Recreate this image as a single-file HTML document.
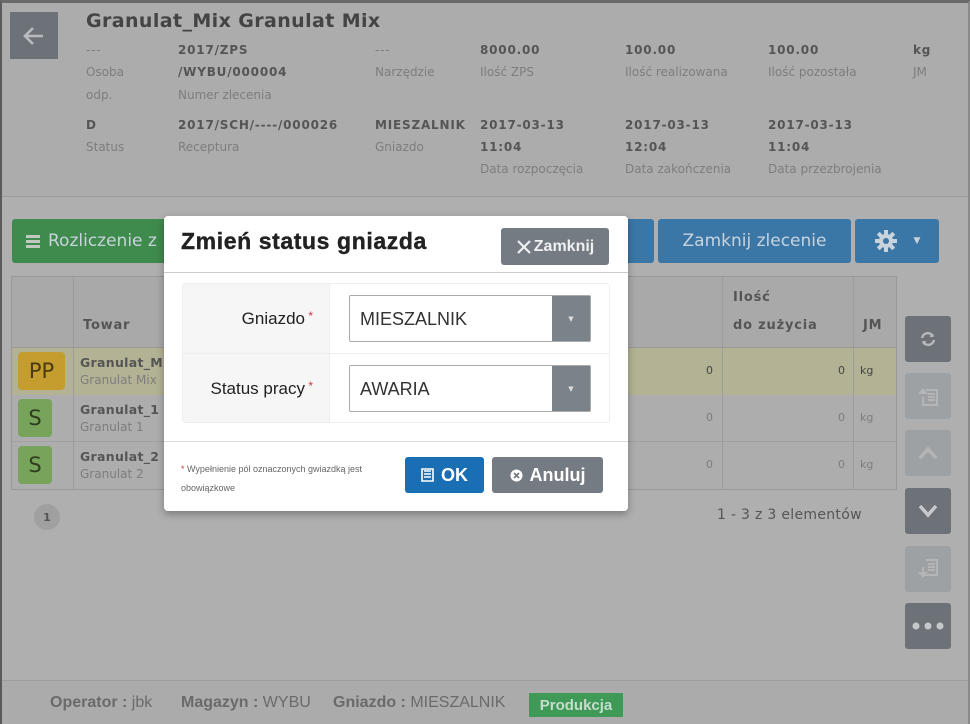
<!DOCTYPE html>
<html><head><meta charset="utf-8"><style>
*{box-sizing:border-box;margin:0;padding:0}
body{width:970px;height:724px;overflow:hidden;background:#afafaf;font-family:"DejaVu Sans","Liberation Sans",sans-serif;position:relative}
.abs{position:absolute}
.frame{position:absolute;left:0;top:0;width:970px;height:724px;border-left:2px solid #5a5a5a;border-top:3px solid #6a6a6a;border-right:2px solid #8a8a8a;pointer-events:none}
.hdr{left:0;top:0;width:970px;height:197px;background:#acacac;border-bottom:1px solid #9c9c9c}
.v{font-size:12px;font-weight:bold;color:#555;white-space:nowrap;letter-spacing:0.8px}
.l{font-size:12px;color:#7d7d7d;white-space:nowrap}
.btn{position:absolute;border-radius:3px;color:#c9d3dc;font-size:17px;display:flex;align-items:center;justify-content:center}
.sb{position:absolute;left:905px;width:46px;height:46px;border-radius:3px;display:flex;align-items:center;justify-content:center}
.foot{left:0;top:680px;width:970px;height:44px;background:#ababab;border-top:1px solid #9d9d9d}
.ft{position:absolute;top:694px;font-size:16px;color:#6a6a6a;white-space:nowrap;font-family:'Liberation Sans Narrow','Liberation Sans',sans-serif}
</style></head><body>
<div class="abs hdr"></div>
<div class="abs" style="left:10px;top:12px;width:48px;height:47px;background:#6c7278;display:flex;align-items:center;justify-content:center">
<svg width="22" height="20" viewBox="0 0 22 20"><path d="M10 2 L2 10 L10 18 M2 10 H20" stroke="#b8bcc0" stroke-width="2.6" fill="none"/></svg></div>
<div class="abs" style="left:86px;top:10px;font-size:19px;font-weight:bold;color:#444;letter-spacing:0.4px">Granulat_Mix Granulat Mix</div>

<div class="abs v" style="left:86px;top:43px;color:#7d7d7d;font-weight:normal">---</div>
<div class="abs l" style="left:86px;top:65px">Osoba</div>
<div class="abs l" style="left:86px;top:88px">odp.</div>
<div class="abs v" style="left:178px;top:43px">2017/ZPS</div>
<div class="abs v" style="left:178px;top:65px">/WYBU/000004</div>
<div class="abs l" style="left:178px;top:88px">Numer zlecenia</div>
<div class="abs v" style="left:375px;top:43px;color:#7d7d7d;font-weight:normal">---</div>
<div class="abs l" style="left:375px;top:65px">Narzędzie</div>
<div class="abs v" style="left:480px;top:43px">8000.00</div>
<div class="abs l" style="left:480px;top:65px">Ilość ZPS</div>
<div class="abs v" style="left:625px;top:43px">100.00</div>
<div class="abs l" style="left:625px;top:65px">Ilość realizowana</div>
<div class="abs v" style="left:768px;top:43px">100.00</div>
<div class="abs l" style="left:768px;top:65px">Ilość pozostała</div>
<div class="abs v" style="left:913px;top:43px">kg</div>
<div class="abs l" style="left:913px;top:65px">JM</div>

<div class="abs v" style="left:86px;top:118px">D</div>
<div class="abs l" style="left:86px;top:140px">Status</div>
<div class="abs v" style="left:178px;top:118px">2017/SCH/----/000026</div>
<div class="abs l" style="left:178px;top:140px">Receptura</div>
<div class="abs v" style="left:375px;top:118px">MIESZALNIK</div>
<div class="abs l" style="left:375px;top:140px">Gniazdo</div>
<div class="abs v" style="left:480px;top:118px">2017-03-13</div>
<div class="abs v" style="left:480px;top:140px">11:04</div>
<div class="abs l" style="left:480px;top:162px">Data rozpoczęcia</div>
<div class="abs v" style="left:625px;top:118px">2017-03-13</div>
<div class="abs v" style="left:625px;top:140px">12:04</div>
<div class="abs l" style="left:625px;top:162px">Data zakończenia</div>
<div class="abs v" style="left:768px;top:118px">2017-03-13</div>
<div class="abs v" style="left:768px;top:140px">11:04</div>
<div class="abs l" style="left:768px;top:162px">Data przezbrojenia</div>

<div class="btn" style="left:12px;top:219px;width:160px;height:44px;background:#3f8a4d;justify-content:flex-start;padding-left:14px">
<span style="display:inline-block;width:14px;margin-right:8px"><span style="display:block;height:3px;background:#c0c8c0;margin:2px 0"></span><span style="display:block;height:3px;background:#c0c8c0;margin:2px 0"></span><span style="display:block;height:3px;background:#c0c8c0;margin:2px 0"></span></span>Rozliczenie z</div>
<div class="btn" style="left:600px;top:219px;width:54px;height:44px;background:#3a76a6"></div>
<div class="btn" style="left:658px;top:219px;width:193px;height:44px;background:#3a76a6">Zamknij zlecenie</div>
<div class="btn" style="left:855px;top:219px;width:84px;height:44px;background:#3a76a6">
<svg width="24" height="24" viewBox="0 0 24 24" style="margin-right:16px"><g fill="#c9d3dc"><circle cx="12" cy="12" r="7"/><rect x="10" y="1" width="4" height="22"/><rect x="1" y="10" width="22" height="4"/><rect x="10" y="1" width="4" height="22" transform="rotate(45 12 12)"/><rect x="10" y="1" width="4" height="22" transform="rotate(-45 12 12)"/></g><circle cx="12" cy="12" r="3" fill="#3a76a6"/></svg><span style="font-size:9px">▼</span></div>

<div class="abs" style="left:11px;top:276px;width:886px;height:214px;border:1px solid #999;background:#a9a9a9"></div>
<div class="abs" style="left:12px;top:348px;width:884px;height:47px;background:#b3b294"></div>
<div class="abs" style="left:12px;top:395px;width:884px;height:94px;background:#adadad"></div>
<div class="abs" style="left:12px;top:347px;width:884px;height:1px;background:#999"></div>
<div class="abs" style="left:12px;top:441px;width:884px;height:1px;background:#a0a0a0"></div>
<div class="abs" style="left:73px;top:277px;width:1px;height:212px;background:#9c9c9c"></div>
<div class="abs" style="left:722px;top:277px;width:1px;height:212px;background:#9c9c9c"></div>
<div class="abs" style="left:853px;top:277px;width:1px;height:212px;background:#9c9c9c"></div>
<div class="abs v" style="left:83px;top:318px;font-size:13px">Towar</div>
<div class="abs v" style="left:733px;top:290px;font-size:13px">Ilość</div>
<div class="abs v" style="left:733px;top:318px;font-size:13px">do zużycia</div>
<div class="abs v" style="left:863px;top:318px;font-size:13px">JM</div>

<div class="abs" style="left:18px;top:352px;width:47px;height:38px;background:#c59d2e;border-radius:4px;font-size:21px;color:#4a3a10;display:flex;align-items:center;justify-content:center">PP</div>
<div class="abs" style="left:18px;top:399px;width:34px;height:38px;background:#78a35a;border-radius:4px;font-size:21px;color:#2e3e20;display:flex;align-items:center;justify-content:center">S</div>
<div class="abs" style="left:18px;top:446px;width:34px;height:38px;background:#78a35a;border-radius:4px;font-size:21px;color:#2e3e20;display:flex;align-items:center;justify-content:center">S</div>
<div class="abs v" style="left:80px;top:355px;font-size:12.5px;letter-spacing:0.3px">Granulat_Mix</div>
<div class="abs l" style="left:80px;top:373px">Granulat Mix</div>
<div class="abs v" style="left:80px;top:402px;font-size:12.5px;letter-spacing:0.3px">Granulat_1</div>
<div class="abs l" style="left:80px;top:420px">Granulat 1</div>
<div class="abs v" style="left:80px;top:449px;font-size:12.5px;letter-spacing:0.3px">Granulat_2</div>
<div class="abs l" style="left:80px;top:467px">Granulat 2</div>
<div class="abs" style="left:706px;top:364px;font-size:11px;color:#444">0</div>
<div class="abs" style="left:838px;top:364px;font-size:11px;color:#444">0</div>
<div class="abs" style="left:860px;top:364px;font-size:11px;color:#444">kg</div>
<div class="abs" style="left:706px;top:411px;font-size:11px;color:#7d7d7d">0</div>
<div class="abs" style="left:838px;top:411px;font-size:11px;color:#7d7d7d">0</div>
<div class="abs" style="left:860px;top:411px;font-size:11px;color:#7d7d7d">kg</div>
<div class="abs" style="left:706px;top:458px;font-size:11px;color:#7d7d7d">0</div>
<div class="abs" style="left:838px;top:458px;font-size:11px;color:#7d7d7d">0</div>
<div class="abs" style="left:860px;top:458px;font-size:11px;color:#7d7d7d">kg</div>

<div class="abs" style="left:34px;top:504px;width:26px;height:26px;border-radius:50%;background:#a0a0a0;font-size:11px;font-weight:bold;color:#555;display:flex;align-items:center;justify-content:center">1</div>
<div class="abs" style="left:717px;top:507px;font-size:14px;color:#555;letter-spacing:0.3px">1 - 3 z 3 elementów</div>

<div class="sb" style="top:316px;background:#6d7278"><svg width="18" height="18" viewBox="0 0 18 18"><path d="M3 8 A6 6 0 0 1 14 6 M15 10 A6 6 0 0 1 4 12" stroke="#b5b9bd" stroke-width="2.4" fill="none"/><path d="M12 3 L15 7 L11 7Z M6 15 L3 11 L7 11Z" fill="#b5b9bd"/></svg></div>
<div class="sb" style="top:373px;background:#9ea1a4"><svg width="22" height="22" viewBox="0 0 22 22"><path d="M9 5h11v15H6v-8M11 9h7M11 12h7M11 15h7" stroke="#b3b5b7" stroke-width="2" fill="none"/><path d="M1 9 L6 3 L11 9Z" fill="#b3b5b7"/></svg></div>
<div class="sb" style="top:430px;background:#9ea1a4"><svg width="20" height="14" viewBox="0 0 20 14"><path d="M2 12 L10 3 L18 12" stroke="#b3b5b7" stroke-width="3.5" fill="none"/></svg></div>
<div class="sb" style="top:488px;background:#6d7278"><svg width="20" height="14" viewBox="0 0 20 14"><path d="M2 2 L10 11 L18 2" stroke="#c6c9cc" stroke-width="3.5" fill="none"/></svg></div>
<div class="sb" style="top:546px;background:#9ea1a4"><svg width="22" height="22" viewBox="0 0 22 22"><path d="M9 2h11v15H6V9M11 6h7M11 9h7M11 12h7" stroke="#b3b5b7" stroke-width="2" fill="none"/><path d="M1 14 L6 20 L11 14Z" fill="#b3b5b7"/></svg></div>
<div class="sb" style="top:603px;background:#6d7278"><svg width="32" height="8" viewBox="0 0 32 8"><circle cx="4" cy="4" r="3.5" fill="#c6c9cc"/><circle cx="16" cy="4" r="3.5" fill="#c6c9cc"/><circle cx="28" cy="4" r="3.5" fill="#c6c9cc"/></svg></div>

<div class="abs foot"></div>
<div class="ft" style="left:50px"><b>Operator :</b> jbk</div>
<div class="ft" style="left:181px"><b>Magazyn :</b> WYBU</div>
<div class="ft" style="left:333px"><b>Gniazdo :</b> MIESZALNIK</div>
<div class="abs" style="left:529px;top:693px;width:94px;height:24px;background:#3f9a58;color:#c6dccc;font-weight:bold;font-size:15px;font-family:'Liberation Sans Narrow','Liberation Sans',sans-serif;display:flex;align-items:center;justify-content:center">Produkcja</div>

<div class="frame"></div>

<!-- modal -->
<div class="abs" style="left:164px;top:216px;width:464px;height:295px;background:#fff;border-radius:4px;box-shadow:0 3px 8px rgba(0,0,0,.3)">
 <div class="abs" style="left:17px;top:12px;font-size:23px;font-weight:bold;color:#222;font-family:'Liberation Sans',sans-serif;letter-spacing:0.6px;-webkit-text-stroke:0.4px #222">Zmień status gniazda</div>
 <div class="abs" style="left:337px;top:12px;width:108px;height:37px;background:#747b82;border-radius:3px;color:#eef0f2;font-weight:bold;font-size:16px;font-family:'Liberation Sans',sans-serif;display:flex;align-items:center;justify-content:center"><svg width="16" height="16" viewBox="0 0 16 16" style="margin-right:2px"><path d="M2 2L14 14M14 2L2 14" stroke="#eef0f2" stroke-width="2.2"/></svg>Zamknij</div>
 <div class="abs" style="left:0;top:56px;width:464px;height:1px;background:#ccc"></div>
 <div class="abs" style="left:18px;top:67px;width:428px;height:140px;border:1px solid #eee;border-radius:3px;overflow:hidden">
  <div class="abs" style="left:0;top:0;width:147px;height:140px;background:#f6f6f6;border-right:1px solid #eee"></div>
  <div class="abs" style="left:0;top:69px;width:428px;height:1px;background:#eee"></div>
  <div class="abs" style="left:0;top:25px;width:130px;text-align:right;font-size:17px;color:#222;font-family:'Liberation Sans',sans-serif">Gniazdo<span style="color:#d33;font-size:12px;vertical-align:top"> *</span></div>
  <div class="abs" style="left:0;top:95px;width:130px;text-align:right;font-size:17px;color:#222;font-family:'Liberation Sans',sans-serif">Status pracy<span style="color:#d33;font-size:12px;vertical-align:top"> *</span></div>
  <div class="abs" style="left:166px;top:11px;width:242px;height:47px;border:1px solid #aaa;border-radius:2px;background:#fff"><span class="abs" style="left:10px;top:13px;font-size:18px;color:#333;font-family:'Liberation Sans',sans-serif">MIESZALNIK</span><div class="abs" style="right:0;top:0;width:38px;height:45px;background:#7b838a;color:#ddd;font-size:7px;display:flex;align-items:center;justify-content:center">▼</div></div>
  <div class="abs" style="left:166px;top:81px;width:242px;height:47px;border:1px solid #aaa;border-radius:2px;background:#fff"><span class="abs" style="left:10px;top:13px;font-size:18px;color:#333;font-family:'Liberation Sans',sans-serif">AWARIA</span><div class="abs" style="right:0;top:0;width:38px;height:45px;background:#7b838a;color:#ddd;font-size:7px;display:flex;align-items:center;justify-content:center">▼</div></div>
 </div>
 <div class="abs" style="left:0;top:225px;width:464px;height:1px;background:#ddd"></div>
 <div class="abs" style="left:17px;top:244px;width:215px;font-size:9px;line-height:19px;color:#666;font-family:'Liberation Sans',sans-serif"><span style="color:#d33">*</span> Wypełnienie pól oznaczonych gwiazdką jest obowiązkowe</div>
 <div class="abs" style="left:241px;top:241px;width:79px;height:36px;background:#1a6fb4;border-radius:3px;color:#fff;font-weight:bold;font-size:18px;font-family:'Liberation Sans',sans-serif;display:flex;align-items:center;justify-content:center"><svg width="13" height="14" viewBox="0 0 13 14" style="margin-right:7px"><path d="M1 1h11v12H1z M3 3h7M3 6h7M3 9h7" stroke="#fff" stroke-width="1.6" fill="none"/></svg>OK</div>
 <div class="abs" style="left:328px;top:241px;width:111px;height:36px;background:#747b82;border-radius:3px;color:#fff;font-weight:bold;font-size:18px;font-family:'Liberation Sans',sans-serif;display:flex;align-items:center;justify-content:center"><svg width="13" height="13" viewBox="0 0 13 13" style="margin-right:7px"><circle cx="6.5" cy="6.5" r="6" fill="#fff"/><path d="M4 4L9 9M9 4L4 9" stroke="#747b82" stroke-width="1.8"/></svg>Anuluj</div>
</div>
</body></html>
